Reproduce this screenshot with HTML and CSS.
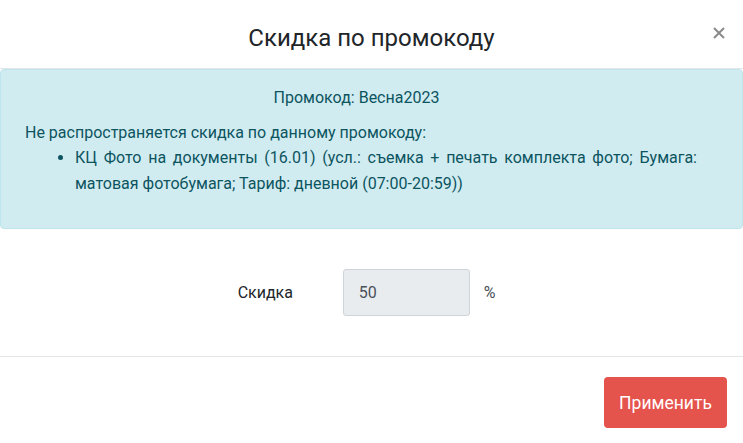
FILE: index.html
```html
<!DOCTYPE html>
<html lang="ru">
<head>
<meta charset="utf-8">
<title>Скидка по промокоду</title>
<link rel="stylesheet" href="styles.css">
</head>
<body>
<div class="modal">
  <div class="modal-header">
    <h5 class="modal-title">Скидка по промокоду</h5>
    <button class="close" type="button" aria-label="Close">
      <svg width="14" height="14" viewBox="0 0 14 14"><path d="M2 2 L12 12 M12 2 L2 12" stroke="#8a8a8a" stroke-width="2" fill="none"/></svg>
    </button>
  </div>
  <div class="alert">
    <div class="alert-title">Промокод: Весна2023</div>
    <div class="alert-text">Не распространяется скидка по данному промокоду:</div>
    <ul class="alert-list">
      <li>КЦ Фото на документы (16.01) (усл.: съемка + печать комплекта фото; Бумага: матовая фотобумага; Тариф: дневной (07:00-20:59))</li>
    </ul>
  </div>
  <div class="modal-body">
    <div class="form-row">
      <label class="form-label">Скидка</label>
      <input class="form-input" type="text" value="50" readonly>
      <span class="form-unit">%</span>
    </div>
  </div>
  <div class="modal-footer">
    <button class="btn-apply" type="button">Применить</button>
  </div>
</div>
</body>
</html>
```
FILE: styles.css
```css
* { box-sizing: border-box; }
html, body { margin: 0; padding: 0; background: #fff; }
body { font-family: Roboto, "Noto Sans", sans-serif; color: #212529; }
.modal { width: 743px; }
.modal-header {
  height: 69px;
  border-bottom: 1px solid #e3e6e9;
  display: flex;
  align-items: center;
  justify-content: center;
  position: relative;
}
.modal-title {
  margin: 0;
  font-size: 24px;
  font-weight: 400;
  color: #212529;
  padding-top: 8px;
}
.close {
  position: absolute;
  right: 17px;
  top: 26px;
  background: none;
  border: 0;
  padding: 0;
  width: 14px;
  height: 14px;
  cursor: pointer;
}
.close svg { display: block; }
.alert {
  background: #d1ecf1;
  border: 1px solid #bee5eb;
  border-radius: 4px;
  color: #0c5460;
  font-size: 16px;
  padding: 17px 24px 26px;
  height: 160px;
}
.alert-title { text-align: center; line-height: 22px; margin-bottom: 12px; margin-right: 30px; }
.alert-text { line-height: 24px; }
.alert-list { margin: 0; padding-left: 50px; padding-right: 21px; line-height: 26px; text-align: justify; }
.modal-body { height: 127px; display: flex; align-items: center; justify-content: center; }
.form-row { display: flex; align-items: center; margin-right: 10px; margin-top: -1px; }
.form-label { font-size: 16px; color: #212529; width: 105px; }
.form-input {
  width: 127px;
  height: 47px;
  background: #e9ecef;
  border: 1px solid #ced4da;
  border-radius: 3px;
  font-family: Roboto, sans-serif;
  font-size: 16px;
  color: #495057;
  padding: 0 15px;
}
.form-unit { font-size: 16px; color: #495057; margin-left: 14px; }
.modal-footer {
  border-top: 1px solid #e3e6e9;
  display: flex;
  justify-content: flex-end;
  padding: 20px 16px 15px;
}
.btn-apply {
  background: #e5534d;
  color: #fff;
  border: 0;
  border-radius: 4px;
  font-family: Roboto, sans-serif;
  font-size: 17.5px;
  width: 123px;
  height: 51px;
  padding: 0;
}
```
